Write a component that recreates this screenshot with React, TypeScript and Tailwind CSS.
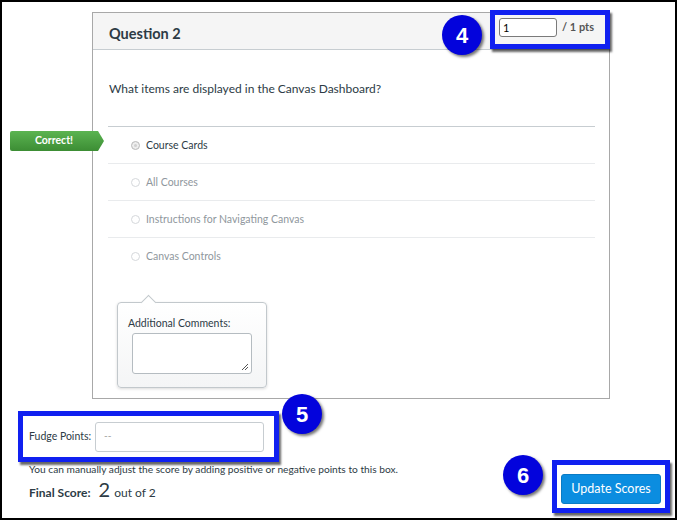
import React from "react";

const font = { fontFamily: "Lato, 'Open Sans', sans-serif" };

function Circle({ n, className }: { n: string; className: string }) {
  return (
    <div
      className={`absolute w-[40px] h-[40px] rounded-full bg-[#0303dc] flex items-center justify-center text-white text-[22px] font-bold shadow-[2px_2px_3px_rgba(0,0,0,0.55)] ${className}`}
      style={{ fontFamily: "'Liberation Sans', Arial, sans-serif" }}
    >
      {n}
    </div>
  );
}

function Row({ label, selected, first }: { label: string; selected?: boolean; first?: boolean }) {
  return (
    <div className={`h-[37px] flex items-center border-t ${first ? "border-[#c7cdd1]" : "border-[#e9ebed]"}`}>
      <div
        className={`ml-[23px] w-[9px] h-[9px] rounded-full border ${
          selected ? "border-[#bfbfbf] bg-[#d0d0d0] shadow-[inset_0_0_0_2px_#eeeeee]" : "border-[#d5d8db] bg-white"
        }`}
      />
      <span className={`ml-[6px] pt-[1px] text-[10.5px] ${selected ? "text-[#2d3b45]" : "text-[#8f979d]"}`}>{label}</span>
    </div>
  );
}

export default function App() {
  return (
    <div
      className="w-[677px] h-[520px] border-2 border-black bg-white relative overflow-hidden flex flex-col"
      style={font}
    >
      {/* Question card */}
      <div className="mt-[10px] ml-[90px] w-[518px] h-[387px] shrink-0 border border-[#a8a8a8] flex flex-col">
        <div className="h-[37px] shrink-0 bg-[#f5f5f5] border-b border-[#c7cdd1] flex items-start justify-between pl-[16px] pr-[15px]">
          <div className="mt-[11px] text-[14.5px] leading-[20px] font-bold text-[#2d3b45]">Question 2</div>
          <div className="mt-[5px] flex items-center gap-[5px]">
            <div className="w-[58px] h-[19px] border border-[#7a7a7a] rounded-[3px] bg-white text-[11px] leading-[17px] pl-[3px] text-black">
              1
            </div>
            <span className="text-[11px] font-bold text-[#555]">/ 1 pts</span>
          </div>
        </div>
        <div className="pl-[16px] pt-[29px] text-[12px] leading-[20px] text-[#2d3b45]">
          What items are displayed in the Canvas Dashboard?
        </div>
        <div className="mt-[27px] ml-[15px] mr-[14px]">
          <Row label="Course Cards" selected first />
          <Row label="All Courses" />
          <Row label="Instructions for Navigating Canvas" />
          <Row label="Canvas Controls" />
        </div>
        {/* Comments popover */}
        <div className="relative mt-[28px] ml-[24px] w-[150px] h-[86px] border border-[#c2c8cc] rounded-[4px] bg-gradient-to-b from-white to-[#f4f5f6] shadow-[0_1px_3px_rgba(0,0,0,0.15)]">
          <div className="absolute left-[25px] top-[-6px] w-[11px] h-[11px] rotate-45 bg-white border-l border-t border-[#c2c8cc]" />
          <div className="relative pl-[10px] pt-[13px] text-[10.5px] leading-[14px] text-[#2d3b45]">Additional Comments:</div>
          <div className="relative ml-[14px] mt-[3px] w-[120px] h-[41px] border border-[#b5bcc1] rounded-[3px] bg-white">
            <svg className="absolute right-[2px] bottom-[2px]" width="8" height="8" viewBox="0 0 8 8">
              <path d="M7 1 L1 7 M7 4 L4 7" stroke="#555" strokeWidth="1" />
            </svg>
          </div>
        </div>
      </div>

      {/* Bottom */}
      <div className="flex-1 flex justify-between">
        <div className="flex flex-col">
          <div className="mt-[12px] ml-[16px] w-[261px] h-[51px] border-[5px] border-[#1020f0] bg-white shadow-[2px_3px_2px_rgba(0,0,0,0.6)] flex items-center pl-[6px]">
            <span className="text-[10.5px] text-[#2d3b45]">Fudge Points:</span>
            <div className="ml-[4px] w-[169px] h-[30px] border border-[#c7cdd1] rounded-[3px] bg-white text-[10px] text-[#999] pl-[8px] pt-[5px]">
              --
            </div>
          </div>
          <div className="ml-[27px] mt-0 text-[10.2px] leading-[14px] text-[#2d3b45]">
            You can manually adjust the score by adding positive or negative points to this box.
          </div>
          <div className="ml-[27px] mt-[1px] flex items-baseline text-[#2d3b45]">
            <span className="text-[12px] font-bold">Final Score:</span>
            <span className="ml-[8px] text-[20px] leading-[24px]">2</span>
            <span className="ml-[4px] text-[12px]">out of 2</span>
          </div>
        </div>
        <div className="self-end mb-[5px] mr-[5px] w-[118px] h-[53px] border-[5px] border-[#1020f0] bg-white shadow-[2px_3px_2px_rgba(0,0,0,0.6)] flex items-end justify-center pb-[4px]">
          <div className="w-[100px] h-[30px] rounded-[3px] bg-[#0b8de0] border border-[#0a7bc4] text-white text-[12.5px] flex items-center justify-center">
            Update Scores
          </div>
        </div>
      </div>

      {/* Overlays */}
      <div className="absolute left-[8px] top-[129px] w-[94px] h-[20px] [clip-path:polygon(0_0,88px_0,94px_50%,88px_100%,0_100%)] bg-gradient-to-b from-[#5bb451] to-[#3c8d34] rounded-l-[2px]">
        <div className="w-[88px] h-full flex items-center justify-center text-white text-[10.5px] font-bold">Correct!</div>
      </div>
      <div className="absolute left-[488px] top-[8px] w-[120px] h-[39px] border-[5px] border-[#1020f0] shadow-[2px_3px_2px_rgba(0,0,0,0.6)]" />
      <Circle n="4" className="left-[440px] top-[13px]" />
      <Circle n="5" className="left-[280px] top-[392px]" />
      <Circle n="6" className="left-[501px] top-[453px]" />
    </div>
  );
}
